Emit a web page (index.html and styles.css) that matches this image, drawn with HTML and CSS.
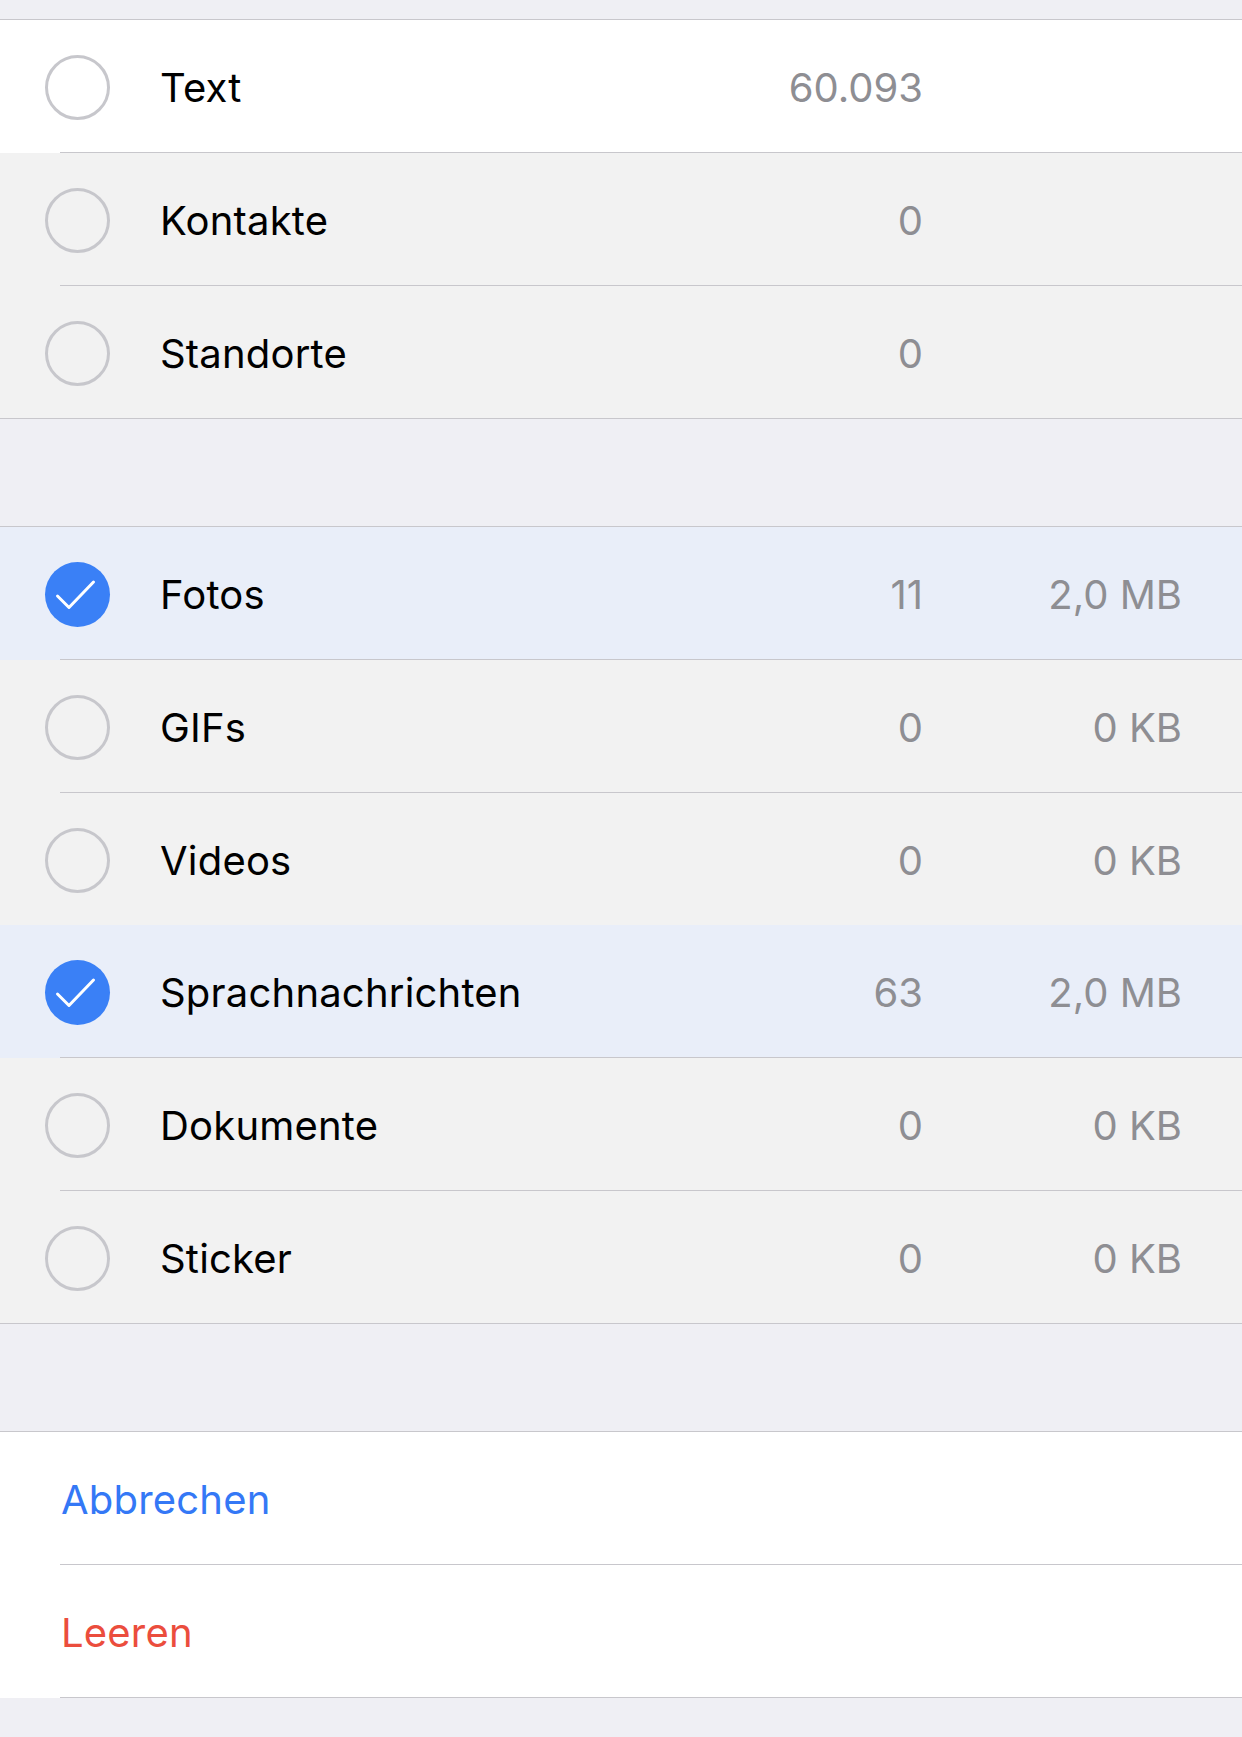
FILE: index.html
```html
<!DOCTYPE html>
<html lang="de">
<head>
<meta charset="utf-8">
<title>Chat leeren</title>
<link rel="stylesheet" href="styles.css">
</head>
<body>
<div class="top-gap"></div>

<section class="group">
  <div class="row row-white">
    <span class="radio"></span>
    <span class="label">Text</span>
    <span class="count">60.093</span>
    <span class="size"></span>
  </div>
  <div class="row">
    <span class="radio"></span>
    <span class="label">Kontakte</span>
    <span class="count">0</span>
    <span class="size"></span>
  </div>
  <div class="row row-last">
    <span class="radio"></span>
    <span class="label">Standorte</span>
    <span class="count">0</span>
    <span class="size"></span>
  </div>
</section>

<div class="gap"></div>

<section class="group">
  <div class="row row-selected">
    <span class="radio radio-on"><svg viewBox="0 0 65 65" width="65" height="65"><polyline points="12.5,34 24,45.5 48.5,20" fill="none" stroke="#ffffff" stroke-width="3" stroke-linecap="round" stroke-linejoin="round"/></svg></span>
    <span class="label">Fotos</span>
    <span class="count">11</span>
    <span class="size">2,0 MB</span>
  </div>
  <div class="row">
    <span class="radio"></span>
    <span class="label">GIFs</span>
    <span class="count">0</span>
    <span class="size">0 KB</span>
  </div>
  <div class="row row-nosep">
    <span class="radio"></span>
    <span class="label">Videos</span>
    <span class="count">0</span>
    <span class="size">0 KB</span>
  </div>
  <div class="row row-selected">
    <span class="radio radio-on"><svg viewBox="0 0 65 65" width="65" height="65"><polyline points="12.5,34 24,45.5 48.5,20" fill="none" stroke="#ffffff" stroke-width="3" stroke-linecap="round" stroke-linejoin="round"/></svg></span>
    <span class="label">Sprachnachrichten</span>
    <span class="count">63</span>
    <span class="size">2,0 MB</span>
  </div>
  <div class="row">
    <span class="radio"></span>
    <span class="label">Dokumente</span>
    <span class="count">0</span>
    <span class="size">0 KB</span>
  </div>
  <div class="row row-last">
    <span class="radio"></span>
    <span class="label">Sticker</span>
    <span class="count">0</span>
    <span class="size">0 KB</span>
  </div>
</section>

<div class="gap"></div>

<section class="group group-actions">
  <div class="action action-blue">Abbrechen</div>
  <div class="action action-red">Leeren</div>
</section>
</body>
</html>
```

FILE: styles.css
```css
* { box-sizing: border-box; }

html, body {
  margin: 0;
  padding: 0;
}

body {
  background: #efeff4;
  font-family: "Inter", "Liberation Sans", sans-serif;
  width: 1242px;
  height: 1737px;
  overflow: hidden;
}

.top-gap { height: 19px; }
.gap { height: 107px; }

.group {
  border-top: 1px solid #c8c7cc;
  border-bottom: 1px solid #c8c7cc;
}

.group-actions {
  border-bottom: none;
}

.row {
  position: relative;
  display: flex;
  align-items: center;
  height: 133px;
  padding: 2px 60px 0 45px;
  background: #f2f2f2;
}

.row::after {
  content: "";
  position: absolute;
  left: 60px;
  right: 0;
  bottom: 0;
  height: 1px;
  background: #c8c7cc;
}

.row-last { height: 132px; }
.row-last::after,
.row-nosep::after { display: none; }
.row-nosep { height: 132px; }

.row-white { background: #ffffff; }
.row-selected { background: #e9eef9; }

.radio {
  flex: none;
  width: 65px;
  height: 65px;
  border-radius: 50%;
  border: 3px solid #c7c7cc;
  margin-right: 50px;
}

.radio-on {
  border: none;
  background: #3a80f6;
  display: flex;
}

.label {
  flex: 1;
  font-size: 40px;
  color: #000000;
  letter-spacing: 0.2px;
}

.count, .size {
  flex: none;
  text-align: right;
  font-size: 40px;
  color: #8e8e93;
}

.count { width: 200px; }
.size { width: 259px; }

.action {
  position: relative;
  height: 133px;
  background: #ffffff;
  display: flex;
  align-items: center;
  padding: 2px 0 0 61px;
  font-size: 40px;
  letter-spacing: 0.2px;
}

.action::after {
  content: "";
  position: absolute;
  left: 60px;
  right: 0;
  bottom: 0;
  height: 1px;
  background: #c8c7cc;
}

.action-blue { color: #3478f6; }
.action-red { color: #eb4d3d; }
```
